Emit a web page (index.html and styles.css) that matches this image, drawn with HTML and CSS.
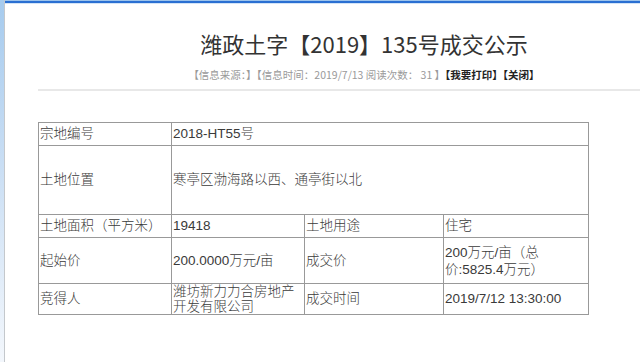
FILE: index.html
```html
<!DOCTYPE html>
<html lang="zh-CN">
<head>
<meta charset="utf-8">
<title>潍政土字【2019】135号成交公示</title>
<link rel="stylesheet" href="styles.css">
</head>
<body>
<div class="app">
  <div class="sidebar"></div>
  <div class="main">
    <div class="topbar"></div>
    <div class="article">
      <h1 class="title">潍政土字【2019】135号成交公示</h1>
      <div class="meta">【信息来源：】【信息时间：2019/7/13 阅读次数：&nbsp;31&nbsp;】<span class="meta-action">【我要打印】【关闭】</span></div>
      <div class="rule"></div>
      <table class="deal">
        <colgroup>
          <col class="c1"><col class="c2"><col class="c3"><col class="c4">
        </colgroup>
        <tr class="r1"><td>宗地编号</td><td colspan="3">2018-HT55号</td></tr>
        <tr class="r2"><td>土地位置</td><td colspan="3">寒亭区渤海路以西、通亭街以北</td></tr>
        <tr class="r3"><td>土地面积（平方米）</td><td>19418</td><td>土地用途</td><td>住宅</td></tr>
        <tr class="r4"><td>起始价</td><td>200.0000万元/亩</td><td>成交价</td><td class="two">200万元/亩（总<br>价:5825.4万元）</td></tr>
        <tr class="r5"><td>竞得人</td><td class="two tight">潍坊新力力合房地产<br>开发有限公司</td><td>成交时间</td><td>2019/7/12 13:30:00</td></tr>
      </table>
    </div>
  </div>
</div>
</body>
</html>
```

FILE: styles.css
```css
html, body {
  margin: 0;
  padding: 0;
  background: #ffffff;
  height: 100%;
  overflow: hidden;
}
.app {
  display: flex;
  height: 362px;
  width: 640px;
  overflow: hidden;
}
.sidebar {
  flex: 0 0 4px;
  background: linear-gradient(to bottom, #a6cbee 0%, #c9def4 45%, #f3f7fc 100%);
  border-right: 1px solid #c4c8cc;
}
.main {
  flex: 1 1 auto;
  min-width: 0;
  overflow: hidden;
}
.topbar {
  height: 2px;
  border-top: 1px solid #9cc3ec;
  border-bottom: 1px solid #d3e4f7;
  background: #2a6fd2;
}
.article {
  width: 652px;
  padding: 24px 0 0 33px;
}
.title {
  margin: 0;
  font-family: "Noto Sans CJK SC", "Noto Sans", sans-serif;
  font-weight: normal;
  font-size: 22px;
  line-height: 30px;
  color: #333333;
  text-align: center;
}
.meta {
  margin-top: 9px;
  font-family: "Noto Sans CJK SC", "Noto Sans", sans-serif;
  font-size: 10.5px;
  line-height: 16px;
  color: #9a9a9a;
  text-align: center;
  white-space: nowrap;
}
.meta-action {
  color: #222222;
  font-weight: bold;
}
.rule {
  margin-top: 6px;
  height: 2px;
  background: #e8e8e8;
}
.deal {
  margin-top: 31px;
  border-collapse: separate;
  border-spacing: 0;
  table-layout: fixed;
  width: 551px;
  border-top: 1px solid #999999;
  border-left: 1px solid #999999;
  font-family: "Liberation Sans", "Noto Sans CJK SC", sans-serif;
  font-weight: 300;
  font-size: 13.5px;
  line-height: 16px;
  color: #3a3a3a;
}
.c1 { width: 133px; }
.c2 { width: 133px; }
.c3 { width: 139px; }
.c4 { width: 145px; }
.deal td {
  border-right: 1px solid #999999;
  border-bottom: 1px solid #999999;
  padding: 0 1px;
  vertical-align: middle;
  white-space: nowrap;
}
.deal .r1 { height: 23px; }
.deal .r2 { height: 69px; }
.deal .r3 { height: 23px; }
.deal .r4 { height: 46px; }
.deal .r5 { height: 31px; }
.deal td.two { line-height: 17px; }
.deal td.tight { line-height: 15px; }
```
